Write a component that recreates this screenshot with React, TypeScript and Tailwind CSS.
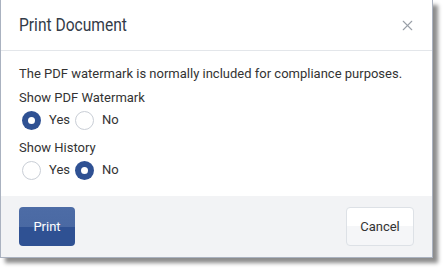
import { X } from "lucide-react";

const Radio = ({ checked }: { checked: boolean }) =>
  checked ? (
    <span className="flex h-[19px] w-[19px] items-center justify-center rounded-full bg-[#2f5193]">
      <span className="h-[7px] w-[7px] rounded-full bg-white" />
    </span>
  ) : (
    <span className="h-[19px] w-[19px] rounded-full border border-[#c9ced6] bg-white" />
  );

const RadioRow = ({ value }: { value: "yes" | "no" }) => (
  <div className="mt-[1px] flex h-[22px] items-center pl-[3px]">
    <Radio checked={value === "yes"} />
    <span className="ml-[8px] mr-[5px] text-[13px]">Yes</span>
    <Radio checked={value === "no"} />
    <span className="ml-[8px] text-[13px]">No</span>
  </div>
);

export default function App() {
  return (
    <div className="h-[273px] w-[448px] bg-white font-['Roboto',sans-serif] text-[#333]">
      <div className="flex h-[258px] w-[433px] flex-col border-x border-b border-[#aab2c0] bg-white shadow-[5px_5px_4px_rgba(0,0,0,0.45)]">
        <div className="flex h-[51px] shrink-0 items-center justify-between border-b border-[#e3e6ea] pl-[18px] pr-[16px]">
          <span className="inline-block origin-left scale-x-[0.82] text-[19px] text-[#333b48]">Print Document</span>
          <X className="h-[17px] w-[17px] text-[#9aa0a8]" strokeWidth={1.6} />
        </div>
        <div className="flex flex-1 flex-col px-[18px] pt-[13px]">
          <p className="h-[20px] text-[13px] leading-[20px]">
            The PDF watermark is normally included for compliance purposes.
          </p>
          <p className="mt-[4px] h-[20px] text-[13px] leading-[20px]">Show PDF Watermark</p>
          <RadioRow value="yes" />
          <p className="mt-[7px] h-[20px] text-[13px] leading-[20px]">Show History</p>
          <RadioRow value="no" />
        </div>
        <div className="flex h-[61px] shrink-0 items-center justify-between bg-[#f2f3f5] px-[18px]">
          <button className="h-[39px] w-[56px] rounded-[4px] bg-[linear-gradient(#4d6ca6_0%,#4a69a3_50%,#2f5193_50%,#2f5193_100%)] text-[13px] text-white">
            Print
          </button>
          <button className="h-[39px] w-[68px] rounded-[4px] border border-[#dde1e6] bg-[linear-gradient(#ffffff_0%,#ffffff_50%,#f5f6f8_50%,#f5f6f8_100%)] text-[13px] text-[#333]">
            Cancel
          </button>
        </div>
      </div>
    </div>
  );
}
